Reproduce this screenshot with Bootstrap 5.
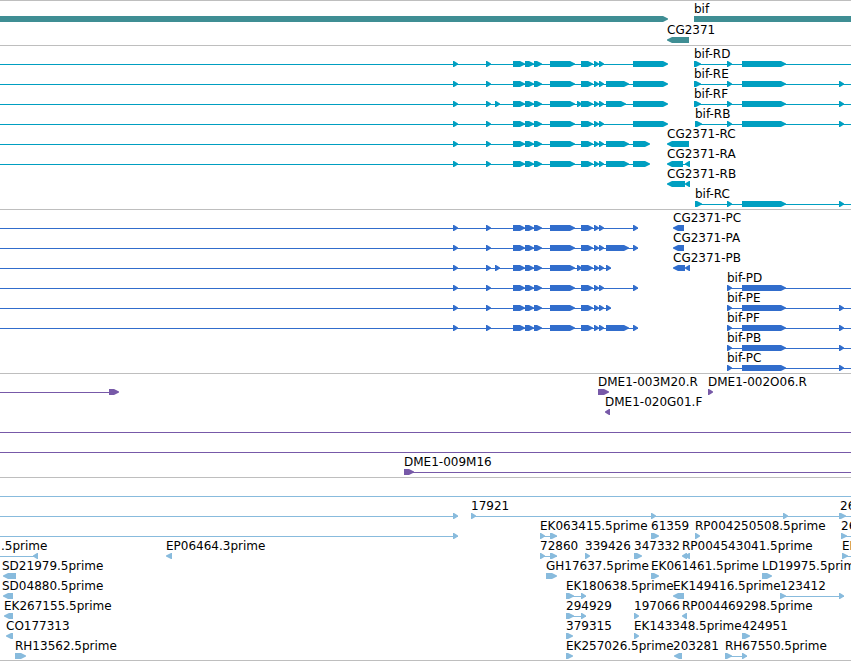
<!DOCTYPE html>
<html lang="en">
<head>
<meta charset="utf-8">
<meta name="viewport" content="width=device-width, initial-scale=1">
<title>Genome tracks</title>
<link href="https://cdn.jsdelivr.net/npm/bootstrap@5.3.0/dist/css/bootstrap.min.css" rel="stylesheet">
<style>
  body { font-family: "DejaVu Sans", sans-serif; font-size: 12px; line-height: 14px; color: #000; }
  .track { border-top: 1px solid #bebebe; padding: 1px 0 2px; }
  .track:last-child { border-bottom: 1px solid #bebebe; padding-bottom: 1px; }
  .lane { height: 20px; padding-top: 14px; }
  .genes { padding-bottom: 1px; }
  .genes .lane { height: 21px; }
  .shapes { display: block; height: 6px; fill: currentColor; overflow: hidden; }
  .shapes rect { shape-rendering: crispEdges; }
  .feature-name { position: absolute; top: 0; white-space: nowrap; color: #000; }
  .genes { color: #3f8e94; }
  .transcripts { color: #009fc1; }
  .proteins { color: #316dcc; }
  .clones { color: #7759a8; }
  .ests { color: #88bbdd; }
</style>
<script src="https://cdn.jsdelivr.net/npm/bootstrap@5.3.0/dist/js/bootstrap.bundle.min.js"></script>
</head>
<body class="bg-white">
<main id="tracks" class="overflow-hidden"></main>
<script>
  const END = null; // feature continues past the right edge

  const start = [[453,458],[486,491]];
  const extra = [[495,500]];
  const mid = [[513,525],[525,534],[534,542],[550,575]];
  const gap = [[577,582]];
  const late = [[581,593],[594,599],[599,604]];
  const core = [...start, ...mid, ...late];
  const coreF = [...start, ...extra, ...mid, ...gap, ...late];
  const left = (end, exons) => ({ l: [[0,end]], f: exons });
  const join = (...parts) => ({
    l: parts.flatMap(p => p.l || []), f: parts.flatMap(p => p.f || []),
    r: parts.flatMap(p => p.r || []), t: parts.flatMap(p => p.t || [])
  });
  const bifR = (x, name, last = true) => ({
    l: [[x,END]], f: [[x,x+7],[727,732],[742,786], ...(last ? [[839,844]] : [])], t: [[x,name]]
  });
  const bifP = (name, last = true) => ({
    l: [[727,END]], f: [[727,732],[742,786], ...(last ? [[839,844]] : [])], t: [[727,name]]
  });

  // l: thin lines, f: forward blocks, r: reverse blocks, t: names
  const tracks = [
    { kind: "genes", lanes: [
      { f: [[0,668]], bars: [[694,END]], t: [[694,"bif"]] },
      { r: [[667,689]], t: [[667,"CG2371"]] }
    ]},
    { kind: "transcripts", lanes: [
      join(left(640, [...core,[633,668]]), bifR(694,"bif-RD",false)),
      join(left(640, [...core,[606,629],[633,668]]), bifR(694,"bif-RE")),
      join(left(640, [...coreF,[606,626],[633,668]]), bifR(694,"bif-RF")),
      join(left(640, [...core,[633,668]]), bifR(695,"bif-RB")),
      join(left(640, [...core,[606,629],[633,650]]), { r: [[667,689]], t: [[667,"CG2371-RC"]] }),
      join(left(640, [...core,[606,629],[633,650]]), { r: [[667,683],[685,690]], l: [[680,688]], t: [[667,"CG2371-RA"]] }),
      { r: [[667,685],[685,690]], t: [[667,"CG2371-RB"]] },
      bifR(695,"bif-RC")
    ]},
    { kind: "proteins", lanes: [
      join(left(638, [...core,[633,638]]), { r: [[673,684]], t: [[673,"CG2371-PC"]] }),
      join(left(638, [...core,[606,629],[633,638]]), { r: [[673,684]], t: [[673,"CG2371-PA"]] }),
      join(left(611, [...coreF,[606,611]]), { r: [[673,685],[685,690]], t: [[673,"CG2371-PB"]] }),
      join(left(638, [...core,[633,638]]), bifP("bif-PD",false)),
      join(left(611, [...core,[606,611]]), bifP("bif-PE")),
      join(left(638, [...core,[606,629],[633,638]]), bifP("bif-PF")),
      bifP("bif-PB"),
      bifP("bif-PC")
    ]},
    { kind: "clones", lanes: [
      { l: [[0,109]], f: [[109,119],[598,609],[708,713]], t: [[598,"DME1-003M20.R"],[708,"DME1-002O06.R"]] },
      { r: [[605,610]], t: [[605,"DME1-020G01.F"]] },
      { l: [[0,END]] },
      { l: [[0,END]] },
      { l: [[404,END]], f: [[404,414]], t: [[404,"DME1-009M16"]] }
    ]},
    { kind: "ests", lanes: [
      { l: [[0,END]] },
      { l: [[0,458],[471,END]], f: [[453,458],[471,476],[651,656],[783,788],[839,846]], t: [[471,"17921"],[840,"26"]] },
      { l: [[0,458],[540,557],[841,END]], f: [[453,458],[540,545],[550,557],[651,659],[695,700],[841,847]],
        t: [[540,"EK063415.5prime"],[651,"61359"],[695,"RP004250508.5prime"],[841,"26"]] },
      { l: [[0,36],[540,557],[842,END]], f: [[540,545],[550,557],[585,590],[634,642],[842,848]], r: [[33,38],[166,172],[682,687],[685,690]],
        t: [[1,".5prime"],[166,"EP06464.3prime"],[540,"72860"],[585,"339426"],[634,"347332"],[682,"RP004543041.5prime"],[842,"EK"]] },
      { f: [[546,557],[651,659],[762,772]], r: [[3,16]],
        t: [[2,"SD21979.5prime"],[546,"GH17637.5prime"],[651,"EK061461.5prime"],[762,"LD19975.5prime"]] },
      { l: [[566,586],[780,844]], f: [[566,574],[581,586],[780,786],[839,844]], r: [[3,13],[673,684]],
        t: [[2,"SD04880.5prime"],[566,"EK180638.5prime"],[673,"EK149416.5prime"],[780,"123412"]] },
      { l: [[566,586]], f: [[566,574],[581,586],[634,639]], r: [[4,13],[682,687]],
        t: [[4,"EK267155.5prime"],[566,"294929"],[634,"197066"],[682,"RP004469298.5prime"]] },
      { f: [[566,573],[634,639],[742,750]], r: [[6,13]],
        t: [[6,"CO177313"],[566,"379315"],[634,"EK143348.5prime"],[742,"424951"]] },
      { l: [[725,747]], f: [[15,26],[566,573],[725,732],[742,747]], r: [[674,682]],
        t: [[15,"RH13562.5prime"],[566,"EK257026.5prime"],[673,"203281"],[725,"RH67550.5prime"]] }
    ]}
  ];

  const rect = (a, b, y, h) => `<rect x="${a}" y="${y}" width="${b === END ? "100%" : b - a}" height="${h}"/>`;
  const forward = (a, b) => {
    const h = Math.max(a, b - 6);
    return `<path d="M${a} 0H${h + 1}L${b} 2.4V3.4L${h + 1} 6H${a}Z"/>`;
  };
  const reverse = (a, b) => {
    const h = Math.min(b, a + 6);
    return `<path d="M${b} 0H${h - 1}L${a} 2.4V3.4L${h - 1} 6H${b}Z"/>`;
  };

  document.getElementById("tracks").innerHTML = tracks.map(track => `
    <section class="track ${track.kind}">${track.lanes.map(lane => `
      <div class="lane position-relative">
        <svg class="shapes w-100" aria-hidden="true">
          ${(lane.l || []).map(([a, b]) => rect(a, b, 3, 1)).join("")}
          ${(lane.bars || []).map(([a, b]) => rect(a, b, 0, 6)).join("")}
          ${(lane.f || []).map(([a, b]) => forward(a, b)).join("")}
          ${(lane.r || []).map(([a, b]) => reverse(a, b)).join("")}
        </svg>
        ${(lane.t || []).map(([x, name]) => `<span class="feature-name" style="left:${x}px">${name}</span>`).join("")}
      </div>`).join("")}
    </section>`).join("");
</script>
</body>
</html>
